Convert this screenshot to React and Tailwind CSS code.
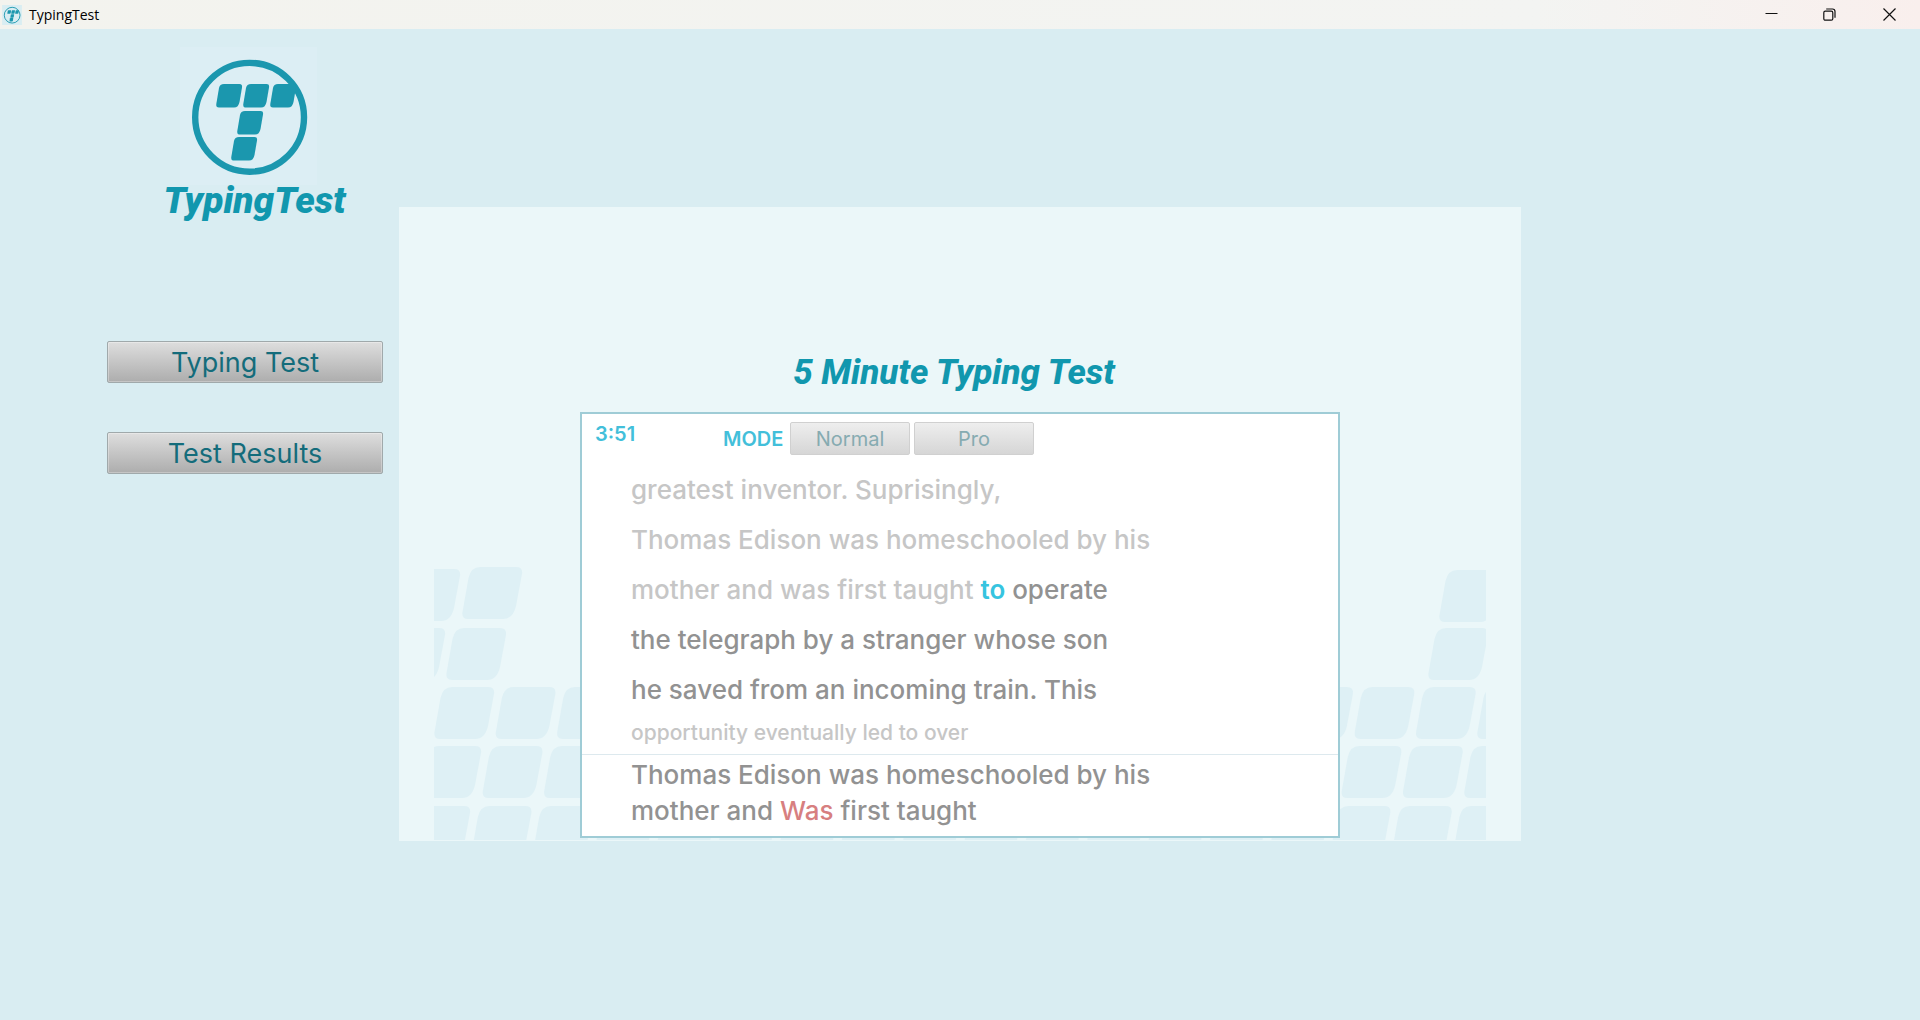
const LOGO_KEYS = [[215, 84], [242, 84], [269, 84], [236, 111], [230, 137]]

const ROWS = [
  { y: 61, start: 12, from: 0, to: 0 },
  { y: 120, start: 0, from: 0, to: 17 },
  { y: 179, start: -13, from: 0, to: 18 },
  { y: 239, start: -24, from: 0, to: 18 },
]

const KEYS = [
  [-34, 2],
  [28, 0],
  [1005, 3],
  [-49, 61],
  [994, 61],
  ...ROWS.flatMap(({ y, start, from, to }) =>
    Array.from({ length: to - from + 1 }, (_, i) => [start + (from + i) * 61.35, y])
  ),
]

const PASSAGE = [
  { done: 'greatest inventor. Suprisingly,' },
  { done: 'Thomas Edison was homeschooled by his' },
  { done: 'mother and was first taught ', current: 'to', rest: ' operate' },
  { rest: 'the telegraph by a stranger whose son' },
  { rest: 'he saved from an incoming train. This' },
]

function Logo({ className, backdrop }) {
  return (
    <svg viewBox="180 47 137 138" className={className} aria-hidden="true">
      <rect x="180" y="47" width="137" height="138" fill={backdrop} />
      <circle cx="249.6" cy="117.3" r="54.4" fill="none" stroke="#1b97ae" strokeWidth="6.4" />
      <g fill="#1b97ae">
        {LOGO_KEYS.map(([x, y]) => (
          <path
            key={`${x}-${y}`}
            transform={`translate(${x} ${y})`}
            d="M4 4Q4.8 0 9 0H24.5Q27.6 0 27 3.5L24.5 18Q23.5 23.5 19 23.5H4Q.8 23.5 1.3 20Z"
          />
        ))}
      </g>
    </svg>
  )
}

function KeyPattern() {
  return (
    <svg
      width="1052"
      height="273"
      viewBox="0 0 1052 273"
      className="col-start-1 row-start-1 mb-px self-end justify-self-center"
      aria-hidden="true"
    >
      <g fill="#def0f5">
        {KEYS.map(([x, y]) => (
          <path
            key={`${x}-${y}`}
            transform={`translate(${x} ${y})`}
            d="M6.5 11Q9 0 18 0H54Q61 0 60 7L54 39Q51 52 41 52H6Q-.5 52 .5 45Z"
          />
        ))}
      </g>
    </svg>
  )
}

function TitleBar() {
  return (
    <header className="flex h-[29px] items-center bg-linear-to-r from-[#f3f3ee] via-[#f3f4f2] via-80% to-[#f9efed] pl-[2px]">
      <Logo className="size-5" backdrop="#d9edf2" />
      <span className="ml-[7px] font-['Open_Sans',sans-serif] text-sm text-black">TypingTest</span>
      <div className="ml-auto flex h-full text-[#111]">
        <button aria-label="Minimize" className="flex w-[58px] items-center justify-center">
          <svg width="13" height="13" viewBox="0 0 13 13" fill="none" stroke="currentColor">
            <path d="M.5 5.5H12.5" />
          </svg>
        </button>
        <button aria-label="Restore" className="flex w-[58px] items-center justify-center">
          <svg width="13" height="13" viewBox="0 0 13 13" fill="none" stroke="currentColor" strokeWidth="1.2">
            <rect x=".8" y="3.2" width="9" height="9" rx="1.5" />
            <path d="M3.2 1H9.5Q12 1 12 3.5V9.8" />
          </svg>
        </button>
        <button aria-label="Close" className="flex w-[62px] items-center justify-center">
          <svg width="13" height="13" viewBox="0 0 13 13" fill="none" stroke="currentColor" strokeWidth="1.2">
            <path d="M.5 .5L12.5 12.5M12.5 .5L.5 12.5" />
          </svg>
        </button>
      </div>
    </header>
  )
}

function NavButton({ children }) {
  return (
    <button className="h-[42px] w-[276px] rounded-xs border border-[#a0a9ab] bg-linear-to-b from-[#dedede] to-[#adadad] pt-px font-[Inter,sans-serif] text-[27px] leading-8 text-[#146c7b] shadow-[inset_0_0_0_1px_rgba(255,255,255,0.3)]">
      {children}
    </button>
  )
}

function ModeButton({ children }) {
  return (
    <button className="h-[33px] w-[120px] rounded-xs border border-[#d0d0d0] bg-linear-to-b from-[#eeeeee] to-[#d6d6d6] text-xl leading-6 font-normal text-[#86abb1]">
      {children}
    </button>
  )
}

export default function App() {
  return (
    <div className="flex min-h-screen flex-col bg-[#d9edf2] font-[Roboto,sans-serif]">
      <TitleBar />
      <div className="flex flex-1 items-start">
        <aside className="w-[399px] pt-[18px]">
          <div className="flex flex-col items-center pl-[110px] text-[#1197ae]">
            <Logo className="mr-3 h-[138px] w-[137px]" backdrop="#dceef4" />
            <p className="text-[37px] leading-8 font-black italic">TypingTest</p>
          </div>
          <nav className="mt-[124px] flex flex-col gap-[49px] pl-[107px]">
            <NavButton>Typing Test</NavButton>
            <NavButton>Test Results</NavButton>
          </nav>
        </aside>

        <main className="mt-[178px] mr-[399px] grid flex-1 bg-[#ebf7f9]">
          <KeyPattern />
          <section className="col-start-1 row-start-1 flex w-[760px] flex-col justify-self-center pt-[146px] pb-[3px]">
            <h1 className="mb-[19px] pr-3 text-center text-[35px] leading-10 font-extrabold text-[#1197ae] italic">
              5 Minute Typing Test
            </h1>
            <div className="border-2 border-[#9fccd6] bg-white font-[Inter,sans-serif] font-medium">
              <div className="flex h-[51px] items-start pt-2 pl-[13px] text-[#43bfda]">
                <time className="w-32 text-xl leading-6 font-semibold">3:51</time>
                <div className="flex items-center gap-1">
                  <span className="w-[63px] text-xl leading-6 font-semibold">MODE</span>
                  <ModeButton>Normal</ModeButton>
                  <ModeButton>Pro</ModeButton>
                </div>
              </div>
              <div className="pl-[49px] text-[26px] leading-[50px]">
                {PASSAGE.map(({ done, current, rest }) => (
                  <p key={done || rest} className="whitespace-pre text-[#929292]">
                    <span className="text-[#c6c6c6]">{done}</span>
                    <span className="font-semibold text-[#36c4e0]">{current}</span>
                    {rest}
                  </p>
                ))}
                <p className="h-[39px] text-[21px] leading-9 text-[#c6c6c6]">opportunity eventually led to over</p>
              </div>
              <div className="border-t border-[#dde9ee] pt-[2px] pb-[7px] pl-[49px] text-[26px] leading-9 text-[#929292]">
                <p>Thomas Edison was homeschooled by his</p>
                <p>
                  mother and <span className="text-[#d77f80]">Was</span> first taught
                </p>
              </div>
            </div>
          </section>
        </main>
      </div>
    </div>
  )
}
